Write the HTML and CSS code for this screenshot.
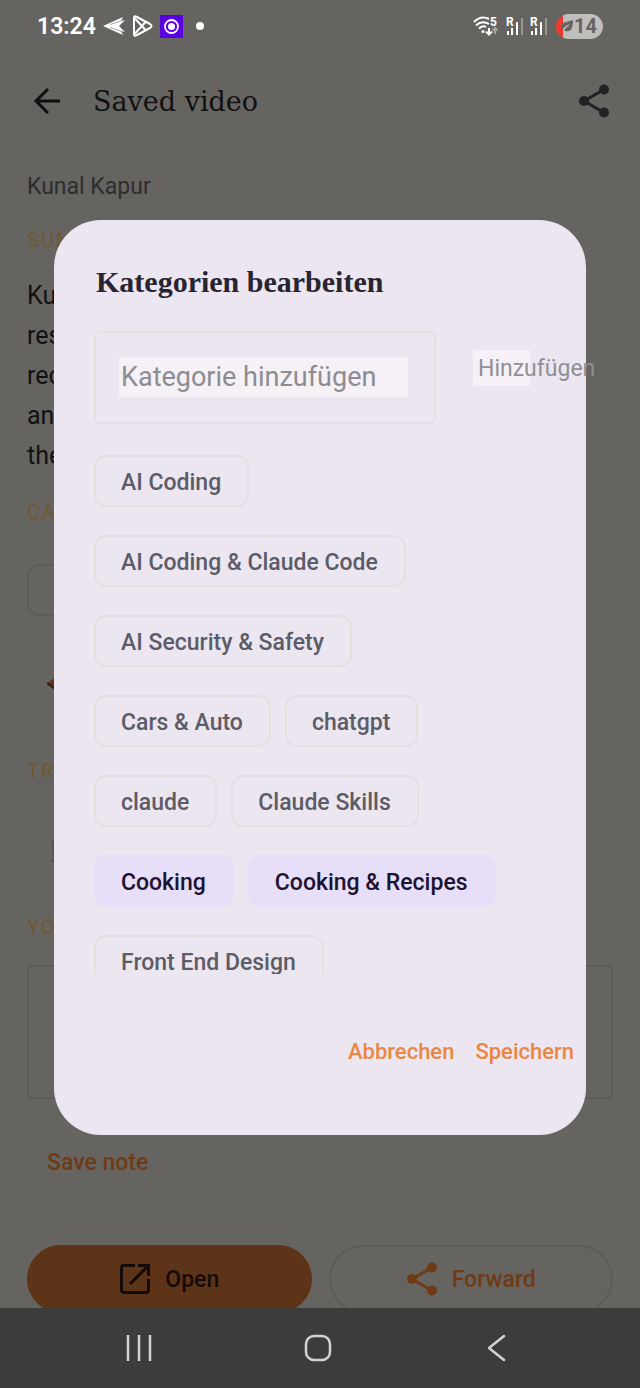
FILE: index.html
```html
<!DOCTYPE html>
<html lang="de">
<head>
    <meta charset="UTF-8">
    <meta name="viewport" content="width=device-width, initial-scale=1.0">
    <title>Saved video</title>
    <link rel="stylesheet" href="styles.css">
</head>
<body>
    <div class="screen">
        <div class="status-bar">
            <div class="status-left">
                <span class="time">13:24</span>
                <svg width="22" height="20" viewBox="0 0 22 20" fill="#fff">
                    <path d="M0 10 L20 1 L18 5 L22 4 L16 10 L22 16 L18 15 L20 19 Z"/>
                    <path d="M7 8.500 L19 4.500 M7 11.500 L19 15.500" stroke="#8b8a88" stroke-width="0.8"/>
                </svg>
                <svg width="21" height="22" viewBox="0 0 21 22" fill="none" stroke="#fff" stroke-width="2" stroke-linejoin="round">
                    <path d="M2 3 Q2 0 5 2 L18 9 Q21 11 18 13 L5 20 Q2 22 2 19 Z"/>
                    <path d="M2.500 3 L14 15.500 M2.500 19 L14 6.500"/>
                </svg>
                <svg width="23" height="23" viewBox="0 0 23 23">
                    <path d="M0 0h23v23H0z" fill="#5b00e0"/>
                    <circle cx="11.500" cy="11.500" r="6.500" fill="none" stroke="#fff" stroke-width="1.800"/>
                    <circle cx="11.500" cy="11.500" r="3.500" fill="#fff"/>
                </svg>
                <span class="dot"></span>
            </div>
            <div class="status-right">
                <svg width="26" height="20" viewBox="0 0 26 20" fill="none" stroke="#fff" stroke-width="2">
                    <path d="M1 6 Q8 -1 16 3 M3 9.500 Q9 4 16 8 M6 12.500 Q10 9 13 11"/>
                    <circle cx="10" cy="15.500" r="1.500" fill="#fff" stroke="none"/>
                    <path d="M16 12 V18 M13 15.500 L16 18.500 L19 15.500"/>
                    <path d="M22 18 V12 M19.500 14.500 L22 12 L24.500 14.500" stroke="#a5a4a2"/>
                    <text x="17" y="10" class="tiny">5</text>
                </svg>
                <svg width="18" height="24" viewBox="0 0 18 24" stroke-width="2">
                    <path d="M3 17 V21 M7 14 V21 M12 8 V21" stroke="#fff"/>
                    <path d="M17 4 V21" stroke="#999896"/>
                    <text x="1" y="12" class="tiny">R</text>
                </svg>
                <svg width="18" height="24" viewBox="0 0 18 24" stroke-width="2">
                    <path d="M3 17 V21 M7 14 V21 M12 8 V21" stroke="#fff"/>
                    <path d="M17 4 V21" stroke="#999896"/>
                    <text x="1" y="12" class="tiny">R</text>
                </svg>
                <span class="battery">
                    <svg width="12" height="12" viewBox="0 0 12 12" fill="#666562">
                        <path d="M0 12 Q-1 3 5 2 L12 0 Q12 10 8 11 Q5 12 3 10 L9 4 Q3 6 0 12 Z"/>
                    </svg>
                    <span>14</span>
                </span>
            </div>
        </div>

        <header class="app-bar">
            <button class="icon-btn" aria-label="Back">
                <svg width="28" height="28" viewBox="0 0 28 28" fill="none" stroke="#100f10" stroke-width="3">
                    <path d="M27 14 H3 M15 2 L3 14 L15 26"/>
                </svg>
            </button>
            <h1>Saved video</h1>
            <button class="icon-btn" aria-label="Share">
                <svg width="32" height="34" viewBox="0 0 32 34" fill="#222124">
                    <path d="M26 5.500 L6 17 L26 28.500" fill="none" stroke="#222124" stroke-width="3"/>
                    <circle cx="26" cy="5.500" r="5"/>
                    <circle cx="6" cy="17" r="5"/>
                    <circle cx="26" cy="28.500" r="5"/>
                </svg>
            </button>
        </header>

        <main class="content">
            <p class="author">Kunal Kapur</p>
            <h2>SUM</h2>
            <p class="summary">Kun<br>res<br>rec<br>and<br>the</p>
            <h2>CA</h2>
            <div class="saved-chip"></div>
            <svg class="row-icon" width="20" height="20" viewBox="0 0 20 20">
                <path d="M0 9 L9 3 V17 Z" fill="#64301c"/>
                <path d="M0 9 L8 15" stroke="#2f1c16" stroke-width="2"/>
            </svg>
            <h2>TR</h2>
            <svg class="row-icon" width="20" height="24" viewBox="0 0 20 24">
                <path d="M5 2 H10 V24 H3 L6 21 Z" fill="#55535b"/>
            </svg>
            <h2>YO</h2>
            <textarea class="note" aria-label="Note"></textarea>
            <button class="save-note">Save note</button>
            <div class="bottom-actions">
                <button class="pill open">
                    <svg width="32" height="32" viewBox="0 0 32 32" fill="none" stroke="#140b08" stroke-width="3">
                        <path d="M16 2.500 H5 Q2.500 2.500 2.500 5 V27 Q2.500 29.500 5 29.500 H27 Q29.500 29.500 29.500 27 V16"/>
                        <path d="M19 2.500 H29.500 V13 M29 3 L11 21"/>
                    </svg>
                    Open
                </button>
                <button class="pill forward">
                    <svg width="32" height="34" viewBox="0 0 32 34" fill="#6f3b16">
                        <path d="M26 5.500 L6 17 L26 28.500" fill="none" stroke="#6f3b16" stroke-width="3"/>
                        <circle cx="26" cy="5.500" r="5"/>
                        <circle cx="6" cy="17" r="5"/>
                        <circle cx="26" cy="28.500" r="5"/>
                    </svg>
                    Forward
                </button>
            </div>
        </main>

        <nav class="nav-bar">
            <button aria-label="Recent apps">
                <svg width="28" height="28" viewBox="0 0 28 28" fill="none" stroke="#d2d2d1" stroke-width="2.500">
                    <path d="M3 1 V27 M14 1 V27 M25 1 V27"/>
                </svg>
            </button>
            <button aria-label="Home">
                <svg width="28" height="28" viewBox="0 0 28 28" fill="none" stroke="#d2d2d1" stroke-width="2.500">
                    <rect x="2" y="2" width="24" height="24" rx="8"/>
                </svg>
            </button>
            <button aria-label="Back">
                <svg width="28" height="28" viewBox="0 0 28 28" fill="none" stroke="#d2d2d1" stroke-width="2.500" stroke-linecap="round" stroke-linejoin="round">
                    <path d="M21 2 L6 14 L21 26"/>
                </svg>
            </button>
        </nav>

        <section class="dialog" role="dialog" aria-labelledby="dialog-title">
            <h2 id="dialog-title">Kategorien bearbeiten</h2>
            <div class="add-row">
                <div class="field">
                    <input type="text" placeholder="Kategorie hinzufügen" aria-label="Kategorie hinzufügen">
                </div>
                <button class="add-btn">Hinzufügen</button>
            </div>
            <div class="chips">
                <div class="chip-row">
                    <button class="chip">AI Coding</button>
                </div>
                <div class="chip-row">
                    <button class="chip">AI Coding &amp; Claude Code</button>
                </div>
                <div class="chip-row">
                    <button class="chip">AI Security &amp; Safety</button>
                </div>
                <div class="chip-row">
                    <button class="chip">Cars &amp; Auto</button>
                    <button class="chip">chatgpt</button>
                </div>
                <div class="chip-row">
                    <button class="chip">claude</button>
                    <button class="chip">Claude Skills</button>
                </div>
                <div class="chip-row">
                    <button class="chip selected">Cooking</button>
                    <button class="chip selected">Cooking &amp; Recipes</button>
                </div>
                <div class="chip-row">
                    <button class="chip">Front End Design</button>
                </div>
            </div>
            <div class="dialog-actions">
                <button>Abbrechen</button>
                <button>Speichern</button>
            </div>
        </section>
    </div>
</body>
</html>
```
FILE: styles.css
```css
* {
    margin: 0;
    padding: 0;
    box-sizing: border-box;
}
body {
    font-family: "Roboto", "Liberation Sans", sans-serif;
    background-color: #666461;
}
button {
    border: none;
    background: none;
    font: inherit;
    color: inherit;
    white-space: nowrap;
}
svg {
    display: block;
    flex-shrink: 0;
}
.screen {
    position: relative;
    display: flex;
    flex-direction: column;
    height: 100vh;
    overflow: hidden;
}

/* status bar */
.status-bar {
    display: flex;
    justify-content: space-between;
    align-items: center;
    height: 52px;
    padding: 0 37px;
    color: #fff;
    flex-shrink: 0;
}
.status-left {
    display: flex;
    align-items: center;
    gap: 7px;
}
.time {
    font-size: 23px;
    font-weight: 600;
}
.dot {
    width: 8px;
    height: 8px;
    margin-left: 6px;
    border-radius: 50%;
    background-color: #fff;
}
.status-right {
    display: flex;
    align-items: center;
    gap: 6px;
}
.tiny {
    font-size: 12px;
    font-weight: 700;
    fill: #fff;
    stroke: none;
}
.battery {
    display: flex;
    align-items: center;
    gap: 1px;
    height: 25px;
    margin-left: 3px;
    padding: 0 6px 0 5px;
    border-radius: 13px;
    background: linear-gradient(to right, #f03a30 7px, #bfbebc 7px);
    color: #666461;
    font-size: 20px;
    font-weight: 700;
}

/* app bar */
.app-bar {
    display: flex;
    align-items: center;
    height: 98px;
    padding: 0 30px 0 33px;
    flex-shrink: 0;
}
.app-bar h1 {
    flex: 1;
    margin-left: 32px;
    font-family: "DejaVu Serif", serif;
    font-size: 27px;
    font-weight: 400;
    color: #121112;
}

/* page behind the dialog */
.content {
    display: flex;
    flex-direction: column;
    flex: 1;
    min-height: 0;
    padding: 17px 27px 0;
    overflow: hidden;
}
.content > * {
    flex-shrink: 0;
}
.author {
    line-height: 40px;
    font-size: 23px;
    color: #2d2c2e;
}
.content h2 {
    margin-top: 19px;
    line-height: 28px;
    font-size: 20px;
    font-weight: 400;
    letter-spacing: 2px;
    color: #70582f;
}
.summary {
    margin-top: 22px;
    line-height: 40px;
    font-size: 25px;
    color: #121112;
}
.content .summary + h2 {
    margin-top: 22px;
}
.saved-chip {
    width: 120px;
    height: 52px;
    margin-top: 38px;
    border: 2px solid #5d5b59;
    border-radius: 12px;
}
.row-icon {
    margin: 58px 0 43px 20px;
}
.content .row-icon + h2 {
    margin-top: 20px;
}
h2 + .row-icon {
    margin: 53px 0 31px 20px;
}
.note {
    width: 100%;
    height: 134px;
    margin-top: 24px;
    border: 2px solid #5d5b59;
    border-radius: 6px;
    background: none;
    resize: none;
}
.save-note {
    align-self: flex-start;
    margin: 44px 0 0 20px;
    line-height: 40px;
    font-size: 23px;
    font-weight: 500;
    color: #6f3b16;
}
.bottom-actions {
    display: flex;
    gap: 17px;
    margin-top: 62px;
}
.pill {
    display: flex;
    flex: 1;
    justify-content: center;
    align-items: center;
    gap: 14px;
    height: 68px;
    border: 2px solid #5d5b59;
    border-radius: 34px;
    font-size: 23px;
    font-weight: 500;
}
.open {
    border-color: #5e3418;
    background-color: #5e3418;
    color: #140b08;
}
.forward {
    color: #6f3b16;
}

/* system navigation */
.nav-bar {
    display: flex;
    justify-content: center;
    align-items: center;
    gap: 151px;
    height: 80px;
    padding-right: 4px;
    background-color: #3c3c3a;
    flex-shrink: 0;
}

/* dialog */
.dialog {
    position: absolute;
    top: 220px;
    left: 54px;
    right: 54px;
    padding: 40px 0 60px 40px;
    border-radius: 47px;
    background-color: #ece6f0;
}
.dialog h2 {
    line-height: 44px;
    padding-left: 2px;
    font-family: "Liberation Serif", serif;
    font-size: 30px;
    font-weight: 700;
    color: #292530;
}
.add-row {
    display: flex;
    gap: 37px;
    margin-top: 27px;
    padding-right: 56px;
}
.field {
    flex: 1;
    height: 93px;
    padding: 24px 26px 0 23px;
    border: 2px solid #e6dfde;
    border-radius: 6px;
}
.field input {
    width: 100%;
    height: 40px;
    padding: 0 2px;
    border: none;
    background-color: #f5f1f7;
    font: inherit;
    font-size: 27px;
}
.field input::placeholder {
    color: #8e8c93;
    opacity: 1;
}
.add-btn {
    width: 57px;
    height: 36px;
    margin-top: 19px;
    padding-left: 5px;
    background-color: #f5f1f7;
    color: #918f96;
    font-size: 23px;
    text-align: left;
}
.chips {
    display: flex;
    flex-direction: column;
    gap: 28px;
    height: 519px;
    margin-top: 31px;
    overflow: hidden;
}
.chip-row {
    display: flex;
    gap: 14px;
}
.chip {
    height: 52px;
    padding: 2px 26px 0 25px;
    border: 2px solid #e6dfde;
    border-radius: 12px;
    font-size: 23px;
    font-weight: 500;
    color: #5c5c68;
}
.chip.selected {
    border-color: #e7def8;
    background-color: #e7def8;
    color: #1d1330;
}
.dialog-actions {
    display: flex;
    justify-content: flex-end;
    gap: 21px;
    margin-top: 55px;
    padding-right: 12px;
    line-height: 46px;
    font-size: 22px;
    font-weight: 500;
    color: #ea8743;
}
```
